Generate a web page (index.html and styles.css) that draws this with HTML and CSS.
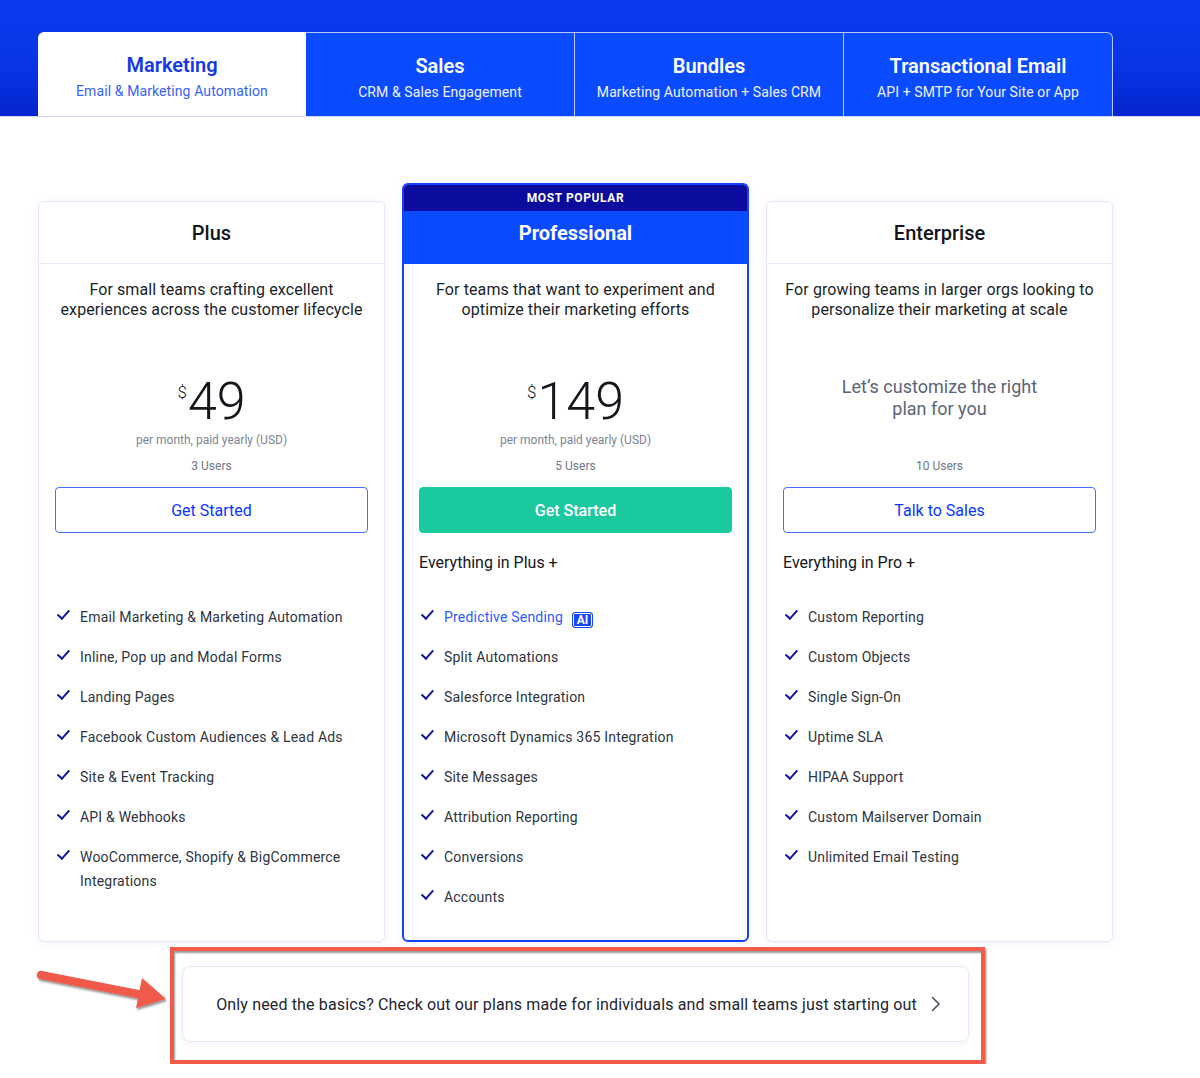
FILE: index.html
```html
<!DOCTYPE html>
<html lang="en">
<head>
    <meta charset="UTF-8">
    <meta name="viewport" content="width=device-width, initial-scale=1.0">
    <title>Pricing</title>
    <link rel="stylesheet" href="styles.css">
</head>
<body>
    <header class="hero">
        <nav class="tabs">
            <a class="tab tab-active">
                <span class="tab-title">Marketing</span>
                <span class="tab-sub">Email &amp; Marketing Automation</span>
            </a>
            <a class="tab">
                <span class="tab-title">Sales</span>
                <span class="tab-sub">CRM &amp; Sales Engagement</span>
            </a>
            <a class="tab">
                <span class="tab-title">Bundles</span>
                <span class="tab-sub">Marketing Automation + Sales CRM</span>
            </a>
            <a class="tab tab-last">
                <span class="tab-title">Transactional Email</span>
                <span class="tab-sub">API + SMTP for Your Site or App</span>
            </a>
        </nav>
    </header>

    <section class="plans">
        <div class="card">
            <div class="card-head">Plus</div>
            <div class="card-body">
                <p class="desc">For small teams crafting excellent experiences across the customer lifecycle</p>
                <div class="price-area">
                    <div class="price"><sup>$</sup>49</div>
                    <div class="period">per month, paid yearly (USD)</div>
                </div>
                <div class="users">3 Users</div>
                <a class="btn">Get Started</a>
                <div class="includes"></div>
                <ul class="features">
                    <li>Email Marketing &amp; Marketing Automation</li>
                    <li>Inline, Pop up and Modal Forms</li>
                    <li>Landing Pages</li>
                    <li>Facebook Custom Audiences &amp; Lead Ads</li>
                    <li>Site &amp; Event Tracking</li>
                    <li>API &amp; Webhooks</li>
                    <li>WooCommerce, Shopify &amp; BigCommerce Integrations</li>
                </ul>
            </div>
        </div>

        <div class="card card-featured">
            <div class="ribbon">MOST POPULAR</div>
            <div class="card-head">Professional</div>
            <div class="card-body">
                <p class="desc">For teams that want to experiment and optimize their marketing efforts</p>
                <div class="price-area">
                    <div class="price"><sup>$</sup>149</div>
                    <div class="period">per month, paid yearly (USD)</div>
                </div>
                <div class="users">5 Users</div>
                <a class="btn btn-green">Get Started</a>
                <div class="includes">Everything in Plus +</div>
                <ul class="features">
                    <li><span class="link">Predictive Sending</span><span class="ai">AI</span></li>
                    <li>Split Automations</li>
                    <li>Salesforce Integration</li>
                    <li>Microsoft Dynamics 365 Integration</li>
                    <li>Site Messages</li>
                    <li>Attribution Reporting</li>
                    <li>Conversions</li>
                    <li>Accounts</li>
                </ul>
            </div>
        </div>

        <div class="card">
            <div class="card-head">Enterprise</div>
            <div class="card-body">
                <p class="desc">For growing teams in larger orgs looking to personalize their marketing at scale</p>
                <div class="price-area">
                    <p class="custom">Let’s customize the right plan for you</p>
                </div>
                <div class="users">10 Users</div>
                <a class="btn">Talk to Sales</a>
                <div class="includes">Everything in Pro +</div>
                <ul class="features">
                    <li>Custom Reporting</li>
                    <li>Custom Objects</li>
                    <li>Single Sign-On</li>
                    <li>Uptime SLA</li>
                    <li>HIPAA Support</li>
                    <li>Custom Mailserver Domain</li>
                    <li>Unlimited Email Testing</li>
                </ul>
            </div>
        </div>
    </section>

    <div class="basics-area">
        <svg class="arrow" width="140" height="50" viewBox="0 0 140 50">
            <defs>
                <filter id="arrow_shadow" x="-10%" y="-30%" width="130%" height="180%">
                    <feDropShadow dx="1" dy="2" stdDeviation="1.2" flood-color="#000" flood-opacity="0.45"/>
                </filter>
            </defs>
            <g filter="url(#arrow_shadow)" fill="#f05a4b">
                <path d="M10 8 L112 28 L110 36 L8 16 Z" />
                <circle cx="9" cy="12" r="4.2" />
                <path d="M110 15 L134 36 L104 45 Z" />
            </g>
        </svg>
        <div class="basics-mark">
            <a class="basics">
                Only need the basics? Check out our plans made for individuals and small teams just starting out
                <svg width="12" height="18" viewBox="0 0 12 18"><path d="M3 2 L10 9 L3 16" fill="none" stroke="#4a5163" stroke-width="1.6"/></svg>
            </a>
        </div>
    </div>
</body>
</html>
```

FILE: styles.css
```css
* {
    padding: 0;
    margin: 0;
    box-sizing: border-box;
}

body {
    font-family: Roboto, "Liberation Sans", Arial, sans-serif;
    color: #1b1f2a;
    background: #fff;
}

.hero {
    height: 117px;
    padding-top: 32px;
    background: linear-gradient(180deg, #0a3bee 0%, #0836e6 55%, #0524cf 100%);
    border-bottom: 1px solid #c9d3fb;
}

.tabs {
    display: flex;
    width: 1075px;
    margin-left: 38px;
}

.tab {
    flex: 1;
    height: 84px;
    padding-top: 21px;
    display: flex;
    flex-direction: column;
    align-items: center;
    background: #0a4bff;
    color: #fff;
    border: 1px solid #b7c6ff;
    border-bottom: none;
    border-left: none;
}

.tab-active {
    background: #fff;
    border: none;
    border-top-left-radius: 6px;
}

.tab-last {
    border-top-right-radius: 6px;
}

.tab-title {
    font-size: 20px;
    line-height: 24px;
    font-weight: 600;
}

.tab-sub {
    margin-top: 5px;
    font-size: 14px;
    line-height: 18px;
    color: #eef2ff;
    letter-spacing: .1px;
}

.tab-active .tab-title {
    color: #1539e6;
}

.tab-active .tab-sub {
    color: #3a62f6;
}

.plans {
    display: grid;
    grid-template-columns: repeat(3, 347px);
    gap: 17px;
    margin: 66px 0 0 38px;
}

.card {
    margin-top: 18px;
    background: #fff;
    border: 1px solid #e3e9fd;
    border-radius: 6px;
    box-shadow: 0 2px 10px rgba(30, 60, 200, .05);
    display: flex;
    flex-direction: column;
}

.card-head {
    height: 62px;
    display: flex;
    align-items: center;
    justify-content: center;
    font-size: 20px;
    font-weight: 500;
    color: #14161c;
    border-bottom: 1px solid #e6ebfb;
}

.card-body {
    padding: 16px 16px 30px;
}

.card-featured {
    margin-top: 0;
    border: 2px solid #1641ff;
    overflow: hidden;
}

.ribbon {
    height: 26px;
    background: #0b0b9e;
    color: #fff;
    font-size: 12px;
    font-weight: 700;
    letter-spacing: .6px;
    display: flex;
    align-items: center;
    justify-content: center;
}

.card-featured .card-head {
    height: 53px;
    padding-bottom: 9px;
    background: #0a4bff;
    color: #fff;
    font-weight: 700;
    border-bottom: none;
}

.card-featured .card-body {
    padding: 16px 15px 31px;
}

.desc {
    min-height: 94px;
    font-size: 16px;
    line-height: 20px;
    text-align: center;
    color: #1b1f2a;
    letter-spacing: .1px;
}

.price-area {
    height: 74px;
    text-align: center;
}

.price {
    font-size: 52px;
    line-height: 56px;
    font-weight: 300;
    color: #14161c;
}

.price sup {
    font-size: 17px;
    vertical-align: 21px;
    line-height: 0;
    margin-right: 1px;
}

.period {
    margin-top: 2px;
    font-size: 12px;
    line-height: 16px;
    color: #7d8594;
}

.custom {
    padding: 2px 40px 0;
    font-size: 18px;
    line-height: 22px;
    color: #5b6477;
}

.users {
    margin-top: 10px;
    font-size: 12px;
    line-height: 16px;
    text-align: center;
    color: #6f7686;
}

.btn {
    display: flex;
    align-items: center;
    justify-content: center;
    height: 46px;
    margin-top: 13px;
    border: 1px solid #4b6cff;
    border-radius: 4px;
    font-size: 16px;
    color: #0b36ff;
    cursor: pointer;
}

.btn-green {
    background: #1bc99f;
    border-color: #1bc99f;
    color: #fff;
    font-weight: 500;
}

.includes {
    height: 24px;
    margin-top: 18px;
    font-size: 16px;
    line-height: 24px;
    color: #14161c;
}

.features {
    list-style: none;
    margin-top: 30px;
    display: flex;
    flex-direction: column;
    gap: 16px;
}

.features li {
    position: relative;
    padding-left: 25px;
    font-size: 14px;
    line-height: 24px;
    letter-spacing: .2px;
    color: #2e3441;
}

.features li::before {
    content: "";
    position: absolute;
    left: 0;
    top: 3px;
    width: 5px;
    height: 10px;
    border: solid #14149c;
    border-width: 0 2.6px 2.6px 0;
    transform: rotate(42deg);
    transform-origin: 100% 100%;
}

.link {
    color: #2d5bff;
}

.ai {
    display: inline-flex;
    align-items: center;
    justify-content: center;
    margin-left: 9px;
    width: 21px;
    height: 16px;
    font-size: 12px;
    font-weight: 700;
    color: #fff;
    background: #1645ff;
    border: 1px solid #1645ff;
    border-radius: 3px;
    box-shadow: inset 0 0 0 1px #fff;
    vertical-align: -2px;
    letter-spacing: 0;
}

.basics-area {
    position: relative;
    margin: 5px 0 0 170px;
    width: 815px;
}

.basics-mark {
    border: 4px solid #f25a4b;
    padding: 15px 12px 18px 8px;
    box-shadow: 1px 2px 2px rgba(0, 0, 0, .5), inset 1px 2px 2px rgba(0, 0, 0, .4);
}

.basics {
    height: 76px;
    display: flex;
    align-items: center;
    justify-content: center;
    gap: 12px;
    border: 1px solid #e3e9fb;
    border-radius: 8px;
    background: #fff;
    box-shadow: 0 2px 8px rgba(30, 60, 200, .05);
    font-size: 16px;
    letter-spacing: .15px;
    color: #1f2430;
    padding-left: 6px;
}

.arrow {
    position: absolute;
    left: -138px;
    top: 16px;
}
```
